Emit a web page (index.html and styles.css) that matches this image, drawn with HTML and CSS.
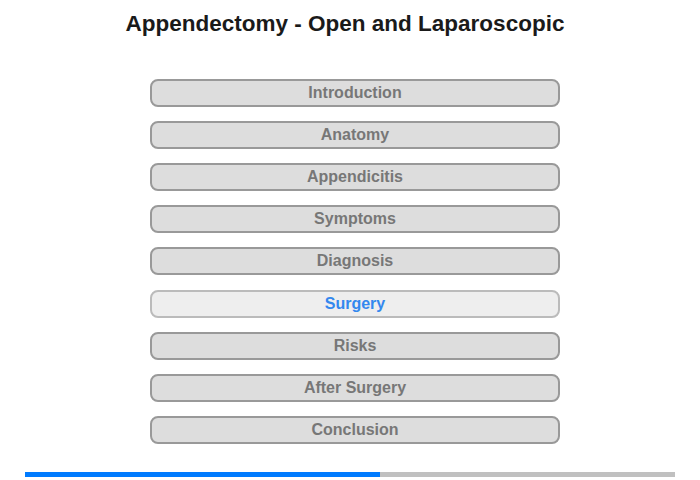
FILE: index.html
```html
<!DOCTYPE html>
<html>
<head>
<meta charset="utf-8">
<link rel="stylesheet" href="styles.css">
</head>
<body>
<div class="page">
  <h1 class="title">Appendectomy - Open and Laparoscopic</h1>
  <nav class="menu">
    <div class="item">Introduction</div>
    <div class="item">Anatomy</div>
    <div class="item">Appendicitis</div>
    <div class="item">Symptoms</div>
    <div class="item">Diagnosis</div>
    <div class="item active">Surgery</div>
    <div class="item">Risks</div>
    <div class="item">After Surgery</div>
    <div class="item">Conclusion</div>
  </nav>
  <div class="progress"><div class="fill" style="width:54.6%"></div></div>
</div>
</body>
</html>
```
FILE: styles.css
```css
html, body {
  margin: 0;
  padding: 0;
  background: #fff;
}
.page {
  width: 700px;
  height: 480px;
  font-family: "Liberation Sans", Arial, sans-serif;
  display: flex;
  flex-direction: column;
}
.title {
  margin: 11px 0 0 0;
  padding-right: 10px;
  font-size: 22.5px;
  line-height: 26px;
  font-weight: bold;
  color: #1a1a1a;
  text-align: center;
}
.menu {
  margin: 42px 0 0 150px;
  width: 410px;
  display: flex;
  flex-direction: column;
  gap: 14px;
}
.item {
  box-sizing: border-box;
  height: 28px;
  border: 2px solid #999;
  border-radius: 8px;
  background: #dddddd;
  color: #777;
  font-size: 16px;
  font-weight: bold;
  text-align: center;
  line-height: 24px;
}
.item.active {
  margin-top: 1px;
  background: #eeeeee;
  border-color: #bbbbbb;
  color: #3388ee;
}
.progress {
  margin: 28px 0 0 25px;
  width: 650px;
  height: 5px;
  background: #c0c0c0;
}
.fill {
  height: 100%;
  background: #007bff;
}
```
